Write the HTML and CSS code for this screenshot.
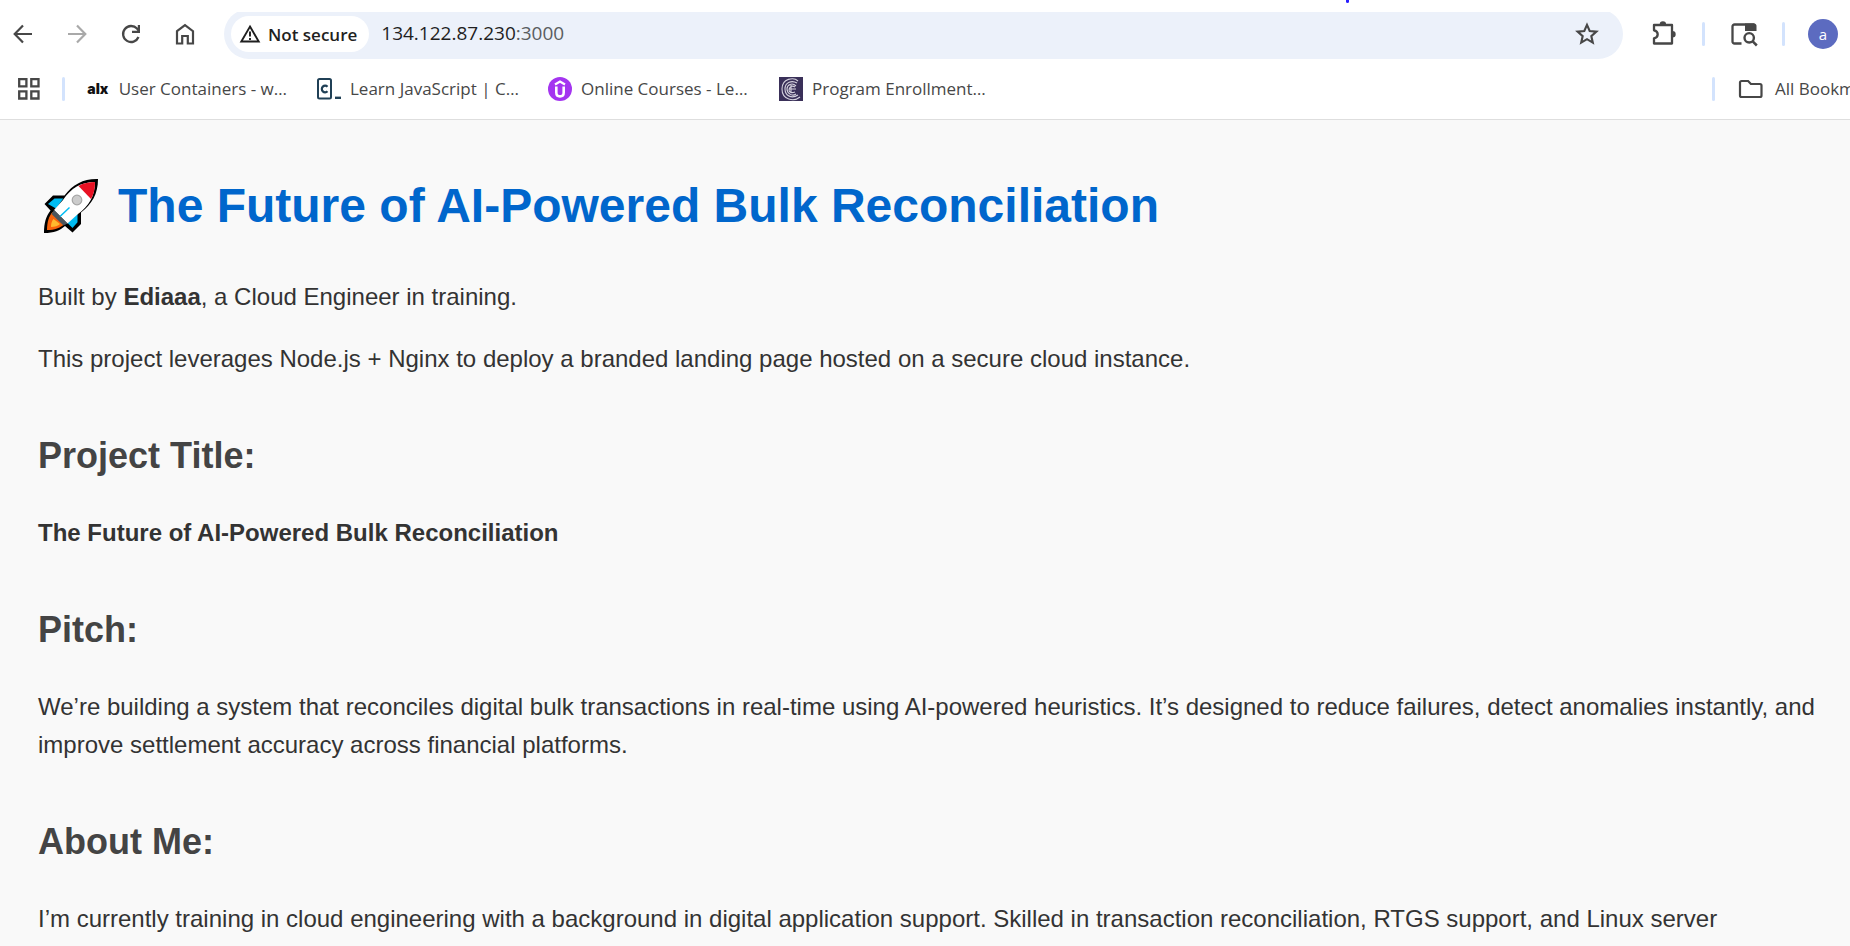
FILE: index.html
```
<!DOCTYPE html>
<html lang="en">
<head>
<meta charset="utf-8">
<title>The Future of AI-Powered Bulk Reconciliation</title>
<link rel="stylesheet" href="styles.css">
</head>
<body>
<header class="browser">
  <span class="ink-dot"></span>
  <div class="toolbar">
    <nav class="nav" aria-label="Navigation">
      <button class="icon-btn" aria-label="Back"><svg width="28" height="28" viewBox="0 0 28 28"><path d="M23 14H6.5M14 5.5 5.700 14l8.300 8.500" fill="none" stroke="#474747" stroke-width="2.200"/></svg></button>
      <button class="icon-btn" aria-label="Forward" disabled><svg width="28" height="28" viewBox="0 0 28 28"><path d="M5 14h16.500M14 5.500l8.300 8.500-8.300 8.500" fill="none" stroke="#a9a9a9" stroke-width="2.200"/></svg></button>
      <button class="icon-btn" aria-label="Reload"><svg width="28" height="28" viewBox="0 0 28 28"><path d="M21.500 17A8 8 0 1 1 20 8.600l2 2.400" fill="none" stroke="#474747" stroke-width="2.300"/><path d="M23 5v8h-8v-2.200h5.800V5z" fill="#474747"/></svg></button>
      <button class="icon-btn" aria-label="Home"><svg width="28" height="28" viewBox="0 0 28 28"><path d="M6 11.200 14 5.200l8 6V23.500h-5.200V16h-5.600v7.500H6z" fill="none" stroke="#474747" stroke-width="2.200"/></svg></button>
    </nav>
    <div class="omnibox">
      <button class="chip"><svg width="22" height="20" viewBox="0 0 22 20"><path d="M11 2.600 19.700 17.500H2.300z" fill="none" stroke="#1f1f1f" stroke-width="1.900"/><path d="M11 7.500v5M11 14v2" stroke="#1f1f1f" stroke-width="1.900"/></svg>Not secure</button>
      <a class="url" href="#top">134.122.87.230<span class="port">:3000</span></a>
      <button class="icon-btn" aria-label="Bookmark this page"><svg width="28" height="28" viewBox="0 0 28 28"><path d="M14 4.800l2.700 6.200 6.700.6-5.100 4.500 1.500 6.600-5.800-3.500-5.800 3.500 1.500-6.600-5.100-4.500 6.700-.6z" fill="none" stroke="#474747" stroke-width="2.100"/></svg></button>
    </div>
    <div class="actions">
      <button class="icon-btn" aria-label="Extensions"><svg width="28" height="28" viewBox="0 0 28 28"><path d="M4 5h18v18.500H4v-5.200c2.400-.4 3.700-1.900 3.700-4s-1.300-3.600-3.700-4z" fill="none" stroke="#474747" stroke-width="2.300" stroke-linejoin="round"/><path d="M9.700 4.500a3.200 3.200 0 0 1 6.400 0zM22.500 11a3.200 3.200 0 0 1 0 6.400z" fill="#474747"/></svg></button>
      <span class="sep"></span>
      <button class="icon-btn" aria-label="Search side panel"><svg width="28" height="28" viewBox="0 0 28 28"><path d="M11.500 23.500H4.500a2 2 0 0 1-2-2v-15a2 2 0 0 1 2-2h20" fill="none" stroke="#474747" stroke-width="2.300"/><path d="M15 3.400h9a2.500 2.500 0 0 1 2.500 2.500V11H15z" fill="#474747"/><circle cx="19.200" cy="17.800" r="4.700" fill="none" stroke="#474747" stroke-width="2.400"/><path d="M22.500 21.200l4.300 4.300" stroke="#474747" stroke-width="2.500"/></svg></button>
      <span class="sep"></span>
      <button class="avatar" aria-label="Profile">a</button>
    </div>
  </div>
  <div class="bookmarks">
    <button class="icon-btn" aria-label="Tab groups"><svg width="24" height="24" viewBox="0 0 24 24"><g fill="none" stroke="#474747" stroke-width="2.300"><path d="M2.200 2.200h7.200v7.200H2.200zM14.300 2.200h7.200v7.200h-7.200zM2.200 14.300h7.200v7.200H2.200zM14.300 14.300h7.200v7.200h-7.200z"/></g></svg></button>
    <span class="sep"></span>
    <div class="links">
      <a class="bookmark" href="#user-containers"><span class="alx">alx</span><span class="label">User Containers - w…</span></a>
      <a class="bookmark" href="#learn-javascript"><svg width="24" height="24" viewBox="0 0 24 24"><rect x="1" y="2" width="13" height="19.500" rx="1.500" fill="none" stroke="#204056" stroke-width="2"/><path d="M18 20.800h6" stroke="#204056" stroke-width="2.400"/><path d="M10.500 9.700a3.300 3.300 0 1 0 0 4.600" fill="none" stroke="#204056" stroke-width="2.200"/></svg><span class="label">Learn JavaScript | C…</span></a>
      <a class="bookmark" href="#online-courses"><svg width="24" height="24" viewBox="0 0 24 24"><circle cx="12" cy="12" r="12" fill="#a435f0"/><path d="M7 7.600 12 4.600l5 3" fill="none" stroke="#fff" stroke-width="2.300"/><path d="M8.300 9.500v6c0 2.500 1.500 3.900 3.700 3.900s3.700-1.400 3.700-3.900v-6" fill="none" stroke="#fff" stroke-width="2.600"/></svg><span class="label">Online Courses - Le…</span></a>
      <a class="bookmark" href="#program-enrollment"><svg width="24" height="24" viewBox="0 0 24 24"><path d="M0 0h24v24H0z" fill="#3a3059"/><g fill="none" stroke="#d5d2de" stroke-width="1.100"><path d="M19 4C15 0 3 1 3 12s12 13 18 8"/><path d="M18 6C13 3 6 5 6 12s7 10 13 6"/><path d="M17 9c-4-4-9-1-9 3s5 8 9 5"/><path d="M16 10c-3-2-6 0-6 3s3 3 6 2M10 12h7M12 8v8"/></g></svg><span class="label">Program Enrollment…</span></a>
    </div>
    <span class="sep"></span>
    <a class="bookmark all" href="#bookmarks"><svg width="28" height="24" viewBox="0 0 28 24"><path d="M4.500 4h6.600l2.800 3H23a1.500 1.500 0 0 1 1.500 1.500v10A1.500 1.500 0 0 1 23 20H4.500A1.500 1.500 0 0 1 3 18.500v-13A1.500 1.500 0 0 1 4.500 4z" fill="none" stroke="#474747" stroke-width="2.200"/></svg><span class="label">All Bookmarks</span></a>
  </div>
</header>
<main class="page" id="top">
  <h1><svg class="rocket" width="56" height="56" viewBox="0 0 56 56" role="img" aria-label="Rocket"><path d="M55 1C41 .5 30 6 21.500 17.500H10L1.500 26l6 6.500C3 38 1 45 1 55c10 0 16-2.500 21-7l7.500 6.500 8.500-8.500V34.500C49 26 55 16 55 1z" fill="#000"/><path d="M11.500 20.500h8.800L13 30.500l-8-4.500z" fill="#00bcf2"/><path d="M34.500 35.500v8.800L29.500 50l-5-5z" fill="#00bcf2"/><path d="M9.500 34C6 38 4 44 4 52c8 0 13-2 17-5.500z" fill="#f7630c"/><path d="M10.500 41c-2 2-2.500 5-2.500 8 4 0 7-1 9-3z" fill="#ffb92e"/><path d="M52 4C38 4 28 10 20 22l-9 10 13.500 13.500L35 36C46 28 52 18 52 4z" fill="#fff"/><path d="M52 4c-6 0-11.500 1-16.500 4L48 21c3-5 4-11 4-17z" fill="#e81123"/><path d="M11 32l13.500 13.500-4 2L8.500 36z" fill="#4c555c"/><circle cx="34" cy="22" r="4.800" fill="#ccc" stroke="#a6a6a6" stroke-width="1.200"/><path d="M26.500 29.500l-9.500 9" stroke="#00bcf2" stroke-width="1.500"/></svg>The Future of AI-Powered Bulk Reconciliation</h1>
  <p>Built by <strong>Ediaaa</strong>, a Cloud Engineer in training.</p>
  <p>This project leverages Node.js + Nginx to deploy a branded landing page hosted on a secure cloud instance.</p>
  <h2>Project Title:</h2>
  <p><strong>The Future of AI-Powered Bulk Reconciliation</strong></p>
  <h2>Pitch:</h2>
  <p>We’re building a system that reconciles digital bulk transactions in real-time using AI-powered heuristics. It’s designed to reduce failures, detect anomalies instantly, and improve settlement accuracy across financial platforms.</p>
  <h2>About Me:</h2>
  <p>I’m currently training in cloud engineering with a background in digital application support. Skilled in transaction reconciliation, RTGS support, and Linux server</p>
</main>
</body>
</html>
```
FILE: styles.css
```
* { box-sizing: border-box; }
html, body { height: 100%; }
body {
  margin: 0;
  display: flex;
  flex-direction: column;
  overflow: hidden;
  background: #f9f9f9;
  color: #333;
  font-family: "Liberation Sans", Arial, sans-serif;
}
button { border: 0; padding: 0; background: none; font: inherit; color: inherit; }
a { color: inherit; text-decoration: none; }
svg { display: block; flex: none; }

.browser {
  position: relative;
  flex: none;
  padding-top: 9px;
  background: #fff;
  border-bottom: 1px solid #dedede;
  font-family: "Open Sans", "Noto Sans", sans-serif;
}
.ink-dot {
  position: absolute;
  top: 0;
  left: 1346px;
  width: 3px;
  height: 3px;
  border-radius: 0 0 2px 2px;
  background: #2a1fff;
}
.toolbar { display: flex; align-items: center; height: 50px; padding: 0 12px 0 5px; }
.nav { display: flex; gap: 18px; margin-right: 21px; }
.icon-btn { display: flex; align-items: center; justify-content: center; flex: none; width: 36px; height: 36px; }
.omnibox {
  display: flex;
  align-items: center;
  flex: 1;
  height: 50px;
  padding: 0 18px 0 7px;
  border-radius: 25px;
  background: #ecf1fa;
  clip-path: inset(3px 0 0 0);
}
.chip {
  display: flex;
  align-items: center;
  gap: 7px;
  height: 36px;
  padding: 0 12px 0 8px;
  border-radius: 18px;
  background: #fff;
  color: #1f1f1f;
  font-size: 17px;
  font-weight: 600;
}
.url { flex: 1; margin-left: 12px; padding-bottom: 2px; font-size: 19px; color: #1f1f1f; }
.port { color: #5a5d61; }
.actions { display: flex; align-items: center; margin-left: 23px; }
.actions .sep { margin: 0 21px 0 20px; }
.sep { flex: none; width: 3px; height: 24px; border-radius: 2px; background: #d3e3fd; }
.avatar {
  width: 30px;
  height: 30px;
  margin-left: 2px;
  border-radius: 50%;
  background: #5c6bc0;
  color: #fff;
  font-size: 15px;
  line-height: 30px;
}

.bookmarks {
  display: flex;
  align-items: center;
  height: 60px;
  padding-left: 11px;
  overflow: hidden;
  color: #474747;
  font-size: 17px;
}
.bookmarks > .icon-btn { margin-right: 15px; }
.links { display: flex; flex: 1; gap: 30px; margin-left: 21px; }
.bookmark { display: flex; align-items: center; gap: 9px; width: 201px; white-space: nowrap; }
.label { padding-bottom: 2px; }
.all { gap: 10px; width: 113px; margin-left: 22px; }
.alx { width: 24px; color: #111; font-family: Inter, sans-serif; font-size: 14px; font-weight: 900; line-height: 24px; text-align: center; }

.page { flex: 1; padding: 47px 32px 0 38px; font-size: 24px; line-height: 38px; }
h1, h2, p { margin: 0; }
h1 {
  display: flex;
  align-items: center;
  gap: 19px;
  margin-bottom: 34px;
  padding-left: 5px;
  color: #06c;
  font-size: 48px;
  line-height: 77px;
}
p { margin-bottom: 24px; }
h2 { margin: 49px 0 29px; color: #444; font-size: 36px; line-height: 58px; }
```
